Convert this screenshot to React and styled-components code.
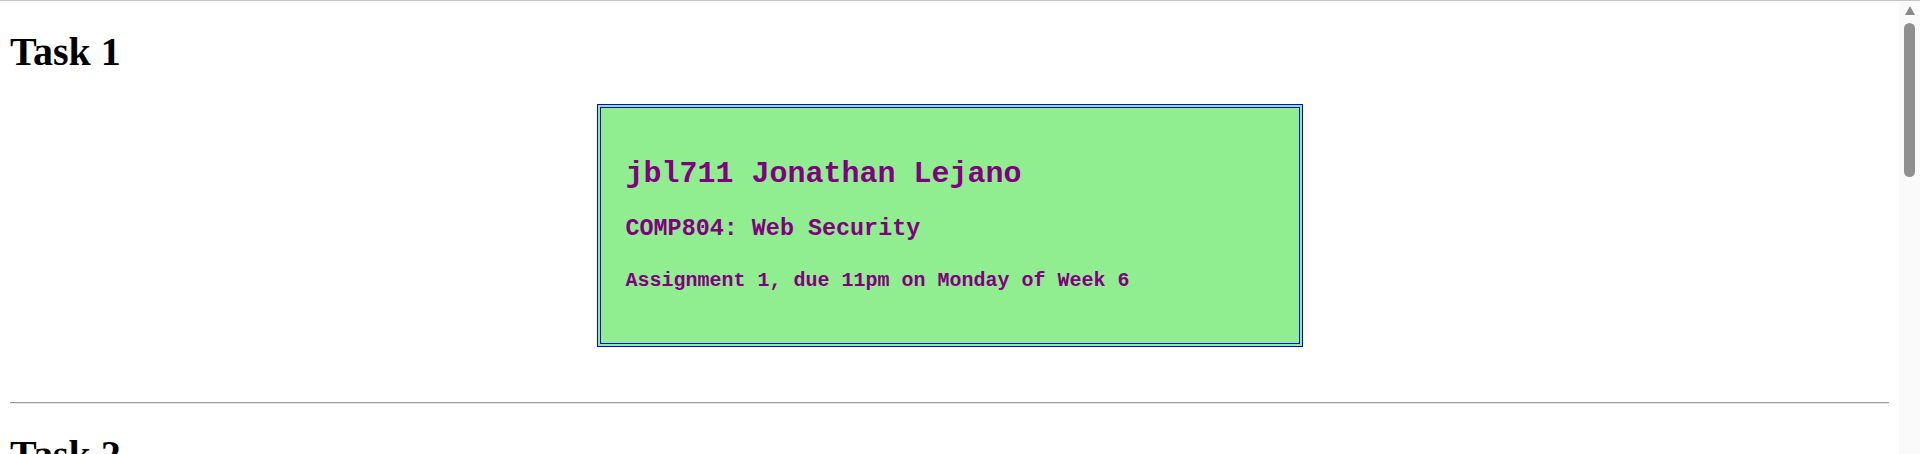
import styled, { createGlobalStyle } from 'styled-components';


// Styles
const GlobalStyle = createGlobalStyle`
    html{
        border-top:1px solid #c6c6c6;
    }
    body{
        margin:10px 31px 10px 10px;
        background-color:#fff;
        font-family:"Liberation Serif", "Times New Roman", serif;
    }
`
const ScrollRail = styled.div`
    top:1px;
    right:0;
    bottom:0;
    width:21px;
    position:fixed;
    display:flex;
    align-items:center;
    flex-direction:column;
    background-color:#fafafa;
`
const ScrollArrow = styled.div`
    width:0;
    height:0;
    margin-top:5px;
    border-left:5.5px solid transparent;
    border-right:5.5px solid transparent;
    border-bottom:9px solid #8a8a8a;
`
const ScrollThumb = styled.div`
    width:11px;
    height:154px;
    margin-top:8px;
    border-radius:6px;
    background-color:#8f8f8f;
`
const TaskHeading = styled.h1`
    font-size:40px;
    font-weight:700;
    margin:${props => props.$first ? '17px' : '26.8px'} 0 26.8px 0;
    color:#000;
`
const TaskSection = styled.section`
    min-height:${props => props.$minHeight || 'auto'};
`
const DetailsBox = styled.div`
    width:706px;
    box-sizing:border-box;
    margin:29px auto 55px auto;
    padding:25px;
    border:4px double #0000ff;
    background-color:#90ee90;
    color:#800080;
    font-family:"Liberation Mono", "Courier New", monospace;
    font-weight:700;
`
const StudentName = styled.h2`
    font-size:30px;
    margin:24px 0 25px 0;
`
const UnitName = styled.h3`
    font-size:23.4px;
    margin:23.4px 0;
`
const DueDate = styled.h4`
    font-size:20px;
    margin:26.6px 0;
`
const Divider = styled.hr`
    height:0;
    margin:10px 0;
    border:none;
    border-top:1px solid #9c9c9c;
    border-bottom:1px solid #e6e6e6;
`


// Main Function
const App = () => {
  return (
    <>
        <GlobalStyle/>
        <TaskSection>
            <TaskHeading $first>Task 1</TaskHeading>
            <DetailsBox>
                <StudentName>jbl711 Jonathan Lejano</StudentName>
                <UnitName>COMP804: Web Security</UnitName>
                <DueDate>Assignment 1, due 11pm on Monday of Week 6</DueDate>
            </DetailsBox>
        </TaskSection>
        <Divider/>
        <TaskSection $minHeight='800px'>
            <TaskHeading>Task 2</TaskHeading>
        </TaskSection>
        <ScrollRail>
            <ScrollArrow/>
            <ScrollThumb/>
        </ScrollRail>
    </>
  )
}


// Export
export default App;
